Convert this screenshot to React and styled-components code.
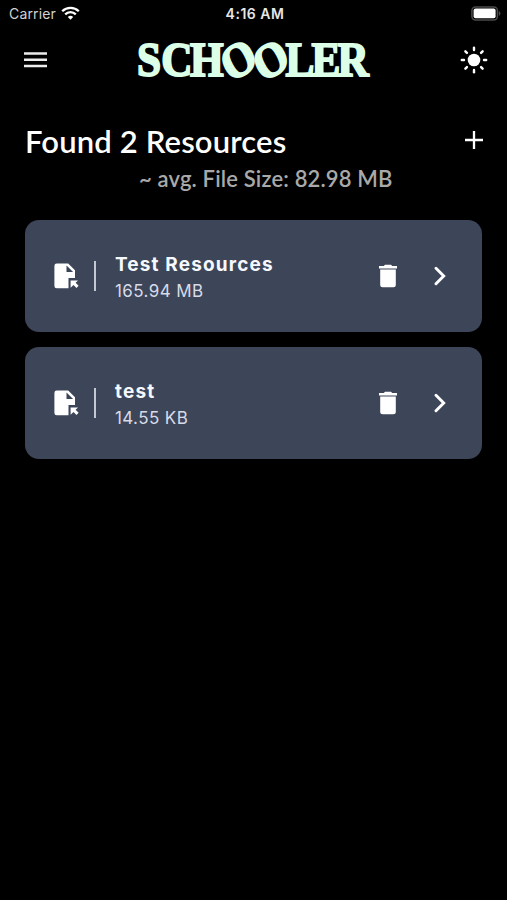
import React from 'react';
import styled, { createGlobalStyle } from 'styled-components';

const GlobalStyle = createGlobalStyle`
  * {
    box-sizing: border-box;
  }

  body {
    margin: 0;
    background: #000;
  }
`;

const Screen = styled.div`
  width: 100%;
  height: 900px;
  overflow: hidden;
  background: #000;
  color: #fff;
  font-family: Inter, 'Liberation Sans', sans-serif;
`;

const StatusBar = styled.div`
  display: grid;
  grid-template-columns: 1fr auto 1fr;
  align-items: center;
  height: 28px;
  padding: 0 6px 0 9px;
  font-size: 14px;
  line-height: 28px;
`;

const Carrier = styled.div`
  display: flex;
  align-items: center;
  gap: 5px;
  color: #d2d2d2;
  letter-spacing: 0.15px;
`;

const WifiWrap = styled.span`
  display: flex;
  padding-bottom: 2px;
`;

const Time = styled.div`
  color: #e6e6e6;
  font-weight: 600;
  letter-spacing: 0.5px;
`;

const Battery = styled.div`
  display: flex;
  justify-content: flex-end;
  padding-bottom: 2px;
`;

const Header = styled.header`
  display: flex;
  justify-content: space-between;
  align-items: center;
  height: 64px;
  padding: 0 19px 0 24px;
`;

const IconButton = styled.button`
  display: flex;
  padding: 0;
  border: none;
  background: none;
  color: inherit;
  cursor: pointer;
`;

const Logo = styled.svg`
  overflow: visible;
  font-family: 'Liberation Serif', serif;
  font-size: 48px;
  font-weight: 700;
  fill: #dcffe8;
  stroke: #dcffe8;
  stroke-width: 2;
`;

const Heading = styled.div`
  display: flex;
  justify-content: space-between;
  align-items: center;
  height: 36px;
  margin-top: 30px;
  padding: 0 24px 0 25px;
`;

const Title = styled.h1`
  margin: 0;
  padding-top: 1px;
  font-family: Lato, sans-serif;
  font-size: 31px;
  font-weight: 600;
  line-height: 36px;
  letter-spacing: 0.15px;
  white-space: nowrap;
`;

const Average = styled.p`
  margin: 7px 0 0;
  padding-left: 139px;
  color: #a9a9a9;
  font-family: Lato, sans-serif;
  font-size: 22px;
  font-weight: 600;
  line-height: 28px;
  letter-spacing: 0.16px;
  white-space: nowrap;
`;

const ResourceList = styled.div`
  display: flex;
  flex-direction: column;
  gap: 15px;
  margin-top: 27px;
  padding: 0 25px;
`;

const Card = styled.div`
  display: flex;
  align-items: center;
  height: 112px;
  padding: 0 36px 0 29px;
  border-radius: 14px;
  background: #3d4558;
`;

const Divider = styled.div`
  width: 1.5px;
  height: 30px;
  margin: 0 19.5px 0 15px;
  background: #c3c8d3;
`;

const Details = styled.div`
  flex: 1;
  padding-top: 5px;
  white-space: nowrap;
`;

const Name = styled.div`
  color: #f5f8ff;
  font-size: 19px;
  font-weight: 700;
  line-height: 26px;
  letter-spacing: 1.15px;
`;

const Size = styled.div`
  color: #d7dbe8;
  font-size: 17px;
  line-height: 27px;
  letter-spacing: 0.4px;
`;

const Actions = styled.div`
  display: flex;
  align-items: center;
  gap: 37px;
`;

const WifiIcon = () => (
  <svg width="19" height="14" viewBox="0 0 19 14" fill="none" stroke="#fff" strokeWidth="2.3">
    <path d="M1.2 5.2a11.8 11.8 0 0 1 16.6 0" />
    <path d="M4.2 8.4a7.5 7.5 0 0 1 10.6 0" />
    <path d="M9.5 13.8 6.8 11a3.8 3.8 0 0 1 5.4 0z" fill="#fff" stroke="none" />
  </svg>
);

const BatteryIcon = () => (
  <svg width="30" height="15" viewBox="0 0 30 15">
    <rect x="0.9" y="0.9" width="25.5" height="13" rx="3.6" fill="none" stroke="#4b4b4b" strokeWidth="1.5" />
    <rect x="2.6" y="2.6" width="22" height="9.6" rx="2" fill="#fff" />
    <path d="M27.8 5v4.8c1-.4 1.6-1.3 1.6-2.4S28.8 5.4 27.8 5z" fill="#4b4b4b" />
  </svg>
);

const MenuIcon = () => (
  <svg width="23" height="16" viewBox="0 0 23 16" fill="#ececec">
    <path d="M0 .2h23v2.5H0zM0 6.5h23V9H0zM0 12.8h23v2.5H0z" />
  </svg>
);

// the two O's are turned so that their counters lean to the left
const Wordmark = () => (
  <Logo width="236" height="40" viewBox="0 0 236 40">
    <text
      transform="scale(0.9 1)"
      x="1 28 60 105.5 141.5 166 195 224"
      y="35.5 35.5 35.5 43 43 35.5 35.5 35.5"
      rotate="0 0 0 -30 -30 0 0 0"
    >
      SCHOOLER
    </text>
  </Logo>
);

const SunIcon = () => (
  <svg width="28" height="28" viewBox="-14 -14 28 28" stroke="#fff" strokeWidth="2.4" strokeLinecap="round">
    <circle r="6.3" fill="#fff" stroke="none" />
    {[0, 45, 90, 135, 180, 225, 270, 315].map(angle => (
      <path key={angle} d="M0-10v-2.2" transform={`rotate(${angle})`} />
    ))}
  </svg>
);

const PlusIcon = () => (
  <svg width="18" height="18" viewBox="0 0 18 18" stroke="#fff" strokeWidth="2.3">
    <path d="M9 0v18M0 9h18" />
  </svg>
);

const FileIcon = () => (
  <svg width="25" height="26" viewBox="0 0 25 26" fill="#fff">
    <path
      fillRule="evenodd"
      d="M2.8.5h11.4L21 7.2v7.7h-6.5v10.4H2.8a2.4 2.4 0 0 1-2.4-2.4v-20A2.4 2.4 0 0 1 2.8.5zM12.5 2.5v6.6h6.6z"
    />
    <path d="M16.6 17.4H24l-2.400 2.400 3 3-2.100 2.100-3-3-2.900 2.900z" />
  </svg>
);

const TrashIcon = () => (
  <svg width="18" height="24" viewBox="0 0 18 24" fill="#fff">
    <path d="M0 2h4.8L6 .7h6L13.2 2H18v2.4H0zM1.2 5.5h15.6v15.3a2.5 2.5 0 0 1-2.5 2.5H3.700a2.500 2.500 0 0 1-2.500-2.500z" />
  </svg>
);

const ChevronIcon = () => (
  <svg width="12" height="20" viewBox="0 0 12 20" fill="none" stroke="#fff" strokeWidth="2.9" strokeLinecap="round">
    <path d="m2 2.3 7.7 7.7L2 17.7" />
  </svg>
);

const resources = [
  { id: 1, name: 'Test Resources', size: '165.94 MB' },
  { id: 2, name: 'test', size: '14.55 KB' }
];

const App = () => {
  return (
    <Screen>
      <GlobalStyle />
      <StatusBar>
        <Carrier>
          Carrier
          <WifiWrap>
            <WifiIcon />
          </WifiWrap>
        </Carrier>
        <Time>4:16 AM</Time>
        <Battery>
          <BatteryIcon />
        </Battery>
      </StatusBar>

      <Header>
        <IconButton aria-label="Menu">
          <MenuIcon />
        </IconButton>
        <Wordmark />
        <IconButton aria-label="Theme">
          <SunIcon />
        </IconButton>
      </Header>

      <Heading>
        <Title>Found 2 Resources</Title>
        <IconButton aria-label="Add resource">
          <PlusIcon />
        </IconButton>
      </Heading>
      <Average>~ avg. File Size: 82.98 MB</Average>

      <ResourceList>
        {resources.map(resource => (
          <Card key={resource.id}>
            <FileIcon />
            <Divider />
            <Details>
              <Name>{resource.name}</Name>
              <Size>{resource.size}</Size>
            </Details>
            <Actions>
              <IconButton aria-label="Delete">
                <TrashIcon />
              </IconButton>
              <IconButton aria-label="Open">
                <ChevronIcon />
              </IconButton>
            </Actions>
          </Card>
        ))}
      </ResourceList>
    </Screen>
  );
};

export default App;
